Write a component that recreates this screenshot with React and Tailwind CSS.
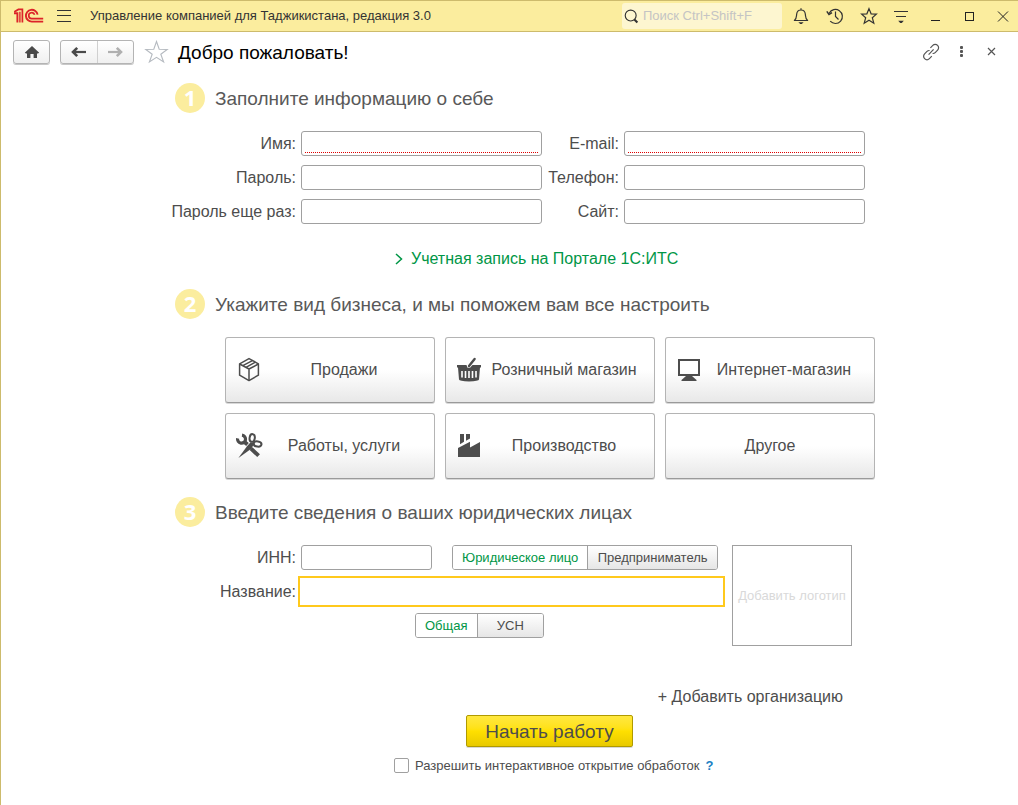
import React, { useState } from 'react';

const inputClass =
  'h-[25px] w-full min-w-0 rounded-[3px] border border-[#a0a0a0] bg-white px-1 text-base text-[#333] outline-none';

const Logo = () => (
  <svg width="30" height="16" viewBox="0 0 30 16" fill="none" stroke="#dc2329" strokeWidth="1.9">
    <path d="M0 5.2H3.4V14.4" />
    <path d="M0.2 3.9L4.4 1.4H8.4V14.4" strokeWidth="1.7" />
    <path d="M5.9 3.8V14.4" strokeWidth="1.4" />
    <path d="M23.6 6.6A5.9 5.9 0 1 0 17.9 13.6H29.2" />
    <path d="M20.6 6.8A3 3 0 1 0 18 10.7H29.2" strokeWidth="1.7" />
  </svg>
);

const MenuIcon = () => (
  <svg width="16" height="16" viewBox="0 0 16 16" stroke="#333" strokeWidth="1">
    <path d="M1 2.5H15M1 7.5H15M1 13.5H15" />
  </svg>
);

const SearchIcon = () => (
  <svg width="17" height="17" viewBox="0 0 17 17" fill="none" stroke="#333">
    <circle cx="7.6" cy="7.4" r="6.2" strokeWidth="1.3" />
    <path d="M11.8 11.8L15.2 15.2" strokeWidth="2.4" />
  </svg>
);

const BellIcon = () => (
  <svg width="20" height="20" viewBox="0 0 20 20" fill="none" stroke="#333" strokeWidth="1.2">
    <path d="M10 2.2V4M3.4 14.5C5.6 12.6 5.4 11 5.6 8.6C5.8 5.8 7.4 4 10 4S14.2 5.8 14.4 8.6C14.6 11 14.4 12.6 16.6 14.5Z" strokeLinejoin="round" />
    <path d="M7.4 16.2H12.6L10.8 18H9.2Z" fill="#333" stroke="none" />
  </svg>
);

const HistoryIcon = () => (
  <svg width="20" height="20" viewBox="0 0 20 20" fill="none" stroke="#333" strokeWidth="1.2">
    <path d="M4.2 7.2A7 7 0 1 1 5.2 15.2" />
    <path d="M10.5 5.5V10.5L13.5 13.5" />
    <path d="M1.8 5.4L4 8.4L7 6.6" strokeWidth="1.5" />
  </svg>
);

const StarIcon = () => (
  <svg width="20" height="20" viewBox="0 0 20 20" fill="none" stroke="#333" strokeWidth="1.2">
    <path d="M10 2.6L12.1 7.8L17.4 8.1L13.3 11.7L14.8 17.2L10 14.2L5.2 17.2L6.7 11.7L2.6 8.1L7.9 7.8Z" />
  </svg>
);

const FilterIcon = () => (
  <svg width="20" height="20" viewBox="0 0 20 20" stroke="#333" strokeWidth="1.2">
    <path d="M3 5.5H17M5 10.5H15" />
    <path d="M7.2 14.8H12.8L10.8 17H9.2Z" fill="#333" stroke="none" />
  </svg>
);

const MinimizeIcon = () => (
  <svg width="20" height="20" viewBox="0 0 20 20" stroke="#222">
    <path d="M6 14.5H15" />
  </svg>
);

const MaximizeIcon = () => (
  <svg width="20" height="20" viewBox="0 0 20 20" fill="none" stroke="#222">
    <rect x="6.5" y="6.5" width="8" height="8" />
  </svg>
);

const CloseIcon = () => (
  <svg width="20" height="20" viewBox="0 0 20 20" stroke="#222" strokeWidth="1">
    <path d="M5 5.5L15 15.5M15 5.5L5 15.5" />
  </svg>
);

const HomeIcon = () => (
  <svg width="16" height="14" viewBox="0 0 16 14" fill="#4a4a4a">
    <path d="M8 1L15.2 7.8L14 8.6H13V13H9.6V9H6.4V13H3V8.6H2L0.8 7.8Z" />
  </svg>
);

const ArrowIcon = ({ flip, color }) => (
  <svg width="16" height="12" viewBox="0 0 16 12" fill="none" stroke={color} strokeWidth="2.2" className={flip ? 'rotate-180' : ''}>
    <path d="M15 6H2.5" />
    <path d="M6.2 1.8L2 6L6.2 10.2" strokeWidth="2.6" />
  </svg>
);

const FavoriteIcon = () => (
  <svg width="25" height="24" viewBox="0 0 25 24" fill="none" stroke="#b5bac0" strokeWidth="1.1">
    <path d="M12.5 1.5L15.2 9.2L23.2 9.4L16.8 14.2L19.6 22L12.5 17.3L5.4 22L8.2 14.2L1.8 9.4L9.8 9.2Z" />
  </svg>
);

const LinkIcon = () => (
  <svg width="20" height="20" viewBox="0 0 20 20" fill="none" stroke="#555" strokeWidth="1.2">
    <path d="M9.4 5.8L11.8 3.4A3.2 3.2 0 0 1 16.6 8.2L14.2 10.6A3.2 3.2 0 0 1 11.6 11.5" />
    <path d="M10.8 14.2L8.4 16.6A3.2 3.2 0 0 1 3.6 11.8L6 9.4A3.2 3.2 0 0 1 8.6 8.5" />
    <path d="M7.6 12.6L12.6 7.4" />
  </svg>
);

const DotsIcon = () => (
  <svg width="20" height="20" viewBox="0 0 20 20" fill="#555">
    <rect x="9" y="4" width="3" height="3" rx="1" />
    <rect x="9" y="8" width="3" height="3" rx="1" />
    <rect x="9" y="12" width="3" height="3" rx="1" />
  </svg>
);

const SmallCloseIcon = () => (
  <svg width="20" height="20" viewBox="0 0 20 20" stroke="#555" strokeWidth="1.2">
    <path d="M7 6L14 13M14 6L7 13" />
  </svg>
);

const BoxIcon = () => (
  <svg width="26" height="26" viewBox="0 0 26 26" fill="none" stroke="#4d4d4d" strokeWidth="1.5" strokeLinejoin="round">
    <path d="M13 1.6L22.4 6.8V18.2L13 23.6L3.6 18.2V6.8Z" />
    <path d="M3.6 7L13 12L22.4 7M13 12V23.4M6.8 8.6L16.4 3.6M10 10.4L19.4 5.2" />
  </svg>
);

const BasketIcon = () => (
  <svg width="26" height="26" viewBox="0 0 26 26" fill="#4d4d4d">
    <path d="M1 8H10.5L11.5 10.8H14L16.5 8H25V10.5H24L23 22.5Q22.8 24 13 24.4Q3.2 24 3 22.5L2 10.5H1Z" />
    <path d="M18.6 2L13 9" stroke="#4d4d4d" strokeWidth="2.4" strokeLinecap="round" />
    <path d="M6 14V20.5M9.5 14V21M13 14V21M16.5 14V21M20 14V20.5" stroke="#fff" strokeWidth="1.6" />
  </svg>
);

const MonitorIcon = () => (
  <svg width="26" height="26" viewBox="0 0 26 26" fill="#4d4d4d">
    <path d="M2 2H24V19H2ZM4 4V17H22V4Z" fillRule="evenodd" />
    <path d="M10 19H16L20.5 23V24H5.5V23Z" />
  </svg>
);

const ToolsIcon = () => (
  <svg width="28" height="26" viewBox="0 0 28 26" fill="none" stroke="#4d4d4d">
    <path d="M2.6 5.4A4 4 0 1 0 7 2.2" strokeWidth="3.2" />
    <path d="M9.5 9L12.5 11.6M16 15.6L23.6 22.6" strokeWidth="4" />
    <path d="M3.4 25L16.6 15.4L19 10.4L15.6 9.2L12 13.2Z" fill="#4d4d4d" stroke="none" />
    <ellipse cx="17.2" cy="5" rx="2.6" ry="3.9" transform="rotate(8 17.2 5)" strokeWidth="2" />
    <ellipse cx="22.6" cy="11" rx="3.9" ry="2.6" transform="rotate(6 22.6 11)" strokeWidth="2" />
  </svg>
);

const FactoryIcon = () => (
  <svg width="26" height="26" viewBox="0 0 26 26" fill="#4d4d4d">
    <path d="M4 1H8V8.8L4 11.2ZM10 1H14V5.6L10 7.8Z" />
    <path d="M2 15L14 8.8V14.4L24 9V24H2Z" />
  </svg>
);

const businessTypes = [
  { label: 'Продажи', icon: BoxIcon },
  { label: 'Розничный магазин', icon: BasketIcon },
  { label: 'Интернет-магазин', icon: MonitorIcon },
  { label: 'Работы, услуги', icon: ToolsIcon },
  { label: 'Производство', icon: FactoryIcon },
  { label: 'Другое' },
];

const serviceButtons = [
  { label: 'Уведомления', icon: BellIcon },
  { label: 'История', icon: HistoryIcon },
  { label: 'Избранное', icon: StarIcon },
];

const windowButtons = [
  { label: 'Настройки', icon: FilterIcon },
  { label: 'Свернуть', icon: MinimizeIcon },
  { label: 'Развернуть', icon: MaximizeIcon },
  { label: 'Закрыть', icon: CloseIcon },
];

const IconButtons = ({ items }) => (
  <div className="flex gap-[14px]">
    {items.map(({ label, icon: Icon }) => (
      <button key={label} type="button" aria-label={label}>
        <Icon />
      </button>
    ))}
  </div>
);

const StepHeading = ({ number, children }) => (
  <div className="flex items-center gap-[10px]">
    <span className="flex size-[30px] shrink-0 items-center justify-center rounded-full bg-[#fbed9e] pb-[3px] font-['Open_Sans',sans-serif] text-[22px] font-bold leading-none text-white">
      {number}
    </span>
    <h2 className="pt-0.5 text-[19px] leading-6 text-[#595959]">{children}</h2>
  </div>
);

const Field = ({ id, label, type = 'text', required }) => (
  <>
    <label htmlFor={id} className="flex justify-end whitespace-nowrap">{label}</label>
    <div className="relative flex">
      <input id={id} type={type} className={inputClass} />
      {required && (
        <span className="pointer-events-none absolute inset-x-[4px] bottom-[3px] border-b border-dotted border-[#e00000]" />
      )}
    </div>
  </>
);

const Segmented = ({ options, value, onChange, className }) => (
  <div className={`flex h-[25px] overflow-hidden rounded-[3px] border border-[#a0a0a0] text-[13px] ${className}`}>
    {options.map((option) => (
      <button
        key={option}
        type="button"
        aria-pressed={option === value}
        onClick={() => onChange(option)}
        className={`whitespace-nowrap border-l border-[#a0a0a0] px-[9px] first:border-l-0 ${
          option === value ? 'bg-white text-[#009646]' : 'flex-1 bg-gradient-to-b from-white to-[#e6e6e6] text-[#4d4d4d]'
        }`}
      >
        {option}
      </button>
    ))}
  </div>
);

const App = () => {
  const [entity, setEntity] = useState('Юридическое лицо');
  const [tax, setTax] = useState('Общая');

  return (
    <div className="min-h-screen border-l border-t border-[#cdbb6c] bg-white font-['Liberation_Sans',Arial,sans-serif] text-base leading-5 text-[#4d4d4d]">
      {/* Title bar */}
      <header className="flex h-[31px] items-center border-b border-[#cdbb6c] bg-[#fbed9e] pl-[13px] pr-[5px] text-[13px] text-[#333]">
        <Logo />
        <button type="button" aria-label="Меню" className="ml-3">
          <MenuIcon />
        </button>
        <span className="ml-[18px] truncate">Управление компанией для Таджикистана, редакция 3.0</span>
        <label className="ml-auto flex h-[26px] w-40 shrink-0 items-center gap-1 rounded-[3px] bg-[#fdf6d0] pl-[2px]">
          <SearchIcon />
          <input
            type="text"
            aria-label="Поиск"
            placeholder="Поиск Ctrl+Shift+F"
            className="w-full min-w-0 bg-transparent outline-none placeholder:text-[#c4c4c4]"
          />
        </label>
        <div className="ml-[9px] flex gap-3">
          <IconButtons items={serviceButtons} />
          <IconButtons items={windowButtons} />
        </div>
      </header>

      {/* Page toolbar */}
      <div className="flex items-center pl-3 pr-[17px] pt-2">
        <button type="button" aria-label="Домой" className="flex h-6 w-[37px] items-center justify-center rounded-[3px] border border-[#b4b4b4] bg-gradient-to-b from-white to-[#f0f0f0] shadow-[0_1px_0_#c8c8c8]">
          <HomeIcon />
        </button>
        <div className="ml-[10px] flex h-6 w-[74px] rounded-[3px] border border-[#b4b4b4] bg-gradient-to-b from-white to-[#f0f0f0] shadow-[0_1px_0_#c8c8c8]">
          <button type="button" aria-label="Назад" className="flex flex-1 items-center justify-center">
            <ArrowIcon color="#4a4a4a" />
          </button>
          <button type="button" aria-label="Вперед" className="flex flex-1 items-center justify-center border-l border-[#d0d0d0]">
            <ArrowIcon color="#b0b0b0" flip />
          </button>
        </div>
        <button type="button" aria-label="Добавить в избранное" className="ml-[10px]">
          <FavoriteIcon />
        </button>
        <h1 className="ml-[9px] pt-0.5 text-[19px] text-black">Добро пожаловать!</h1>
        <div className="ml-auto flex gap-[10px]">
          <button type="button" aria-label="Ссылка"><LinkIcon /></button>
          <button type="button" aria-label="Еще"><DotsIcon /></button>
          <button type="button" aria-label="Закрыть страницу"><SmallCloseIcon /></button>
        </div>
      </div>

      <main className="mx-auto mt-[19px] w-full max-w-[731px] pl-[31px]">
        <StepHeading number="1">Заполните информацию о себе</StepHeading>
        <div className="mr-[10px] mt-[18px] grid grid-cols-[121px_1fr_72px_1fr] items-center gap-x-[5px] gap-y-[9px]">
          <Field id="name" label="Имя:" required />
          <Field id="email" label="E-mail:" type="email" required />
          <Field id="password" label="Пароль:" type="password" />
          <Field id="phone" label="Телефон:" type="tel" />
          <Field id="password2" label="Пароль еще раз:" type="password" />
          <Field id="site" label="Сайт:" type="url" />
        </div>
        <a href="#portal" className="ml-[220px] mt-[25px] flex w-fit items-center gap-2 text-[#009646]">
          <svg width="8" height="12" viewBox="0 0 8 12" fill="none" stroke="#009646" strokeWidth="1.5">
            <path d="M1 1L6.5 6L1 11" />
          </svg>
          Учетная запись на Портале 1С:ИТС
        </a>

        <div className="mt-5">
          <StepHeading number="2">Укажите вид бизнеса, и мы поможем вам все настроить</StepHeading>
        </div>
        <div className="ml-[50px] mt-[18px] grid grid-cols-3 gap-[10px]">
          {businessTypes.map(({ label, icon: Icon }) => (
            <button
              key={label}
              type="button"
              className="flex h-[66px] items-center rounded-[3px] border border-[#b4b4b4] border-b-[#9a9a9a] bg-gradient-to-b from-white from-50% to-[#e8e8e8] px-[9px] shadow-[0_1px_0_#d8d8d8]"
            >
              {Icon && <span className="flex w-7 shrink-0 justify-center"><Icon /></span>}
              <span className="flex-1 whitespace-nowrap text-center">{label}</span>
            </button>
          ))}
        </div>

        <div className="mt-[18px]">
          <StepHeading number="3">Введите сведения о ваших юридических лицах</StepHeading>
        </div>
        <div className="mt-[18px] flex gap-[7px]">
          <div className="flex w-[550px] flex-col gap-[6px]">
            <div className="flex items-center">
              <label htmlFor="inn" className="w-[121px] text-right">ИНН:</label>
              <div className="ml-[5px] flex w-[131px]">
                <input id="inn" type="text" className={inputClass} />
              </div>
              <Segmented
                options={['Юридическое лицо', 'Предприниматель']}
                value={entity}
                onChange={setEntity}
                className="ml-5 w-[266px]"
              />
            </div>
            <div className="flex items-center">
              <label htmlFor="company" className="w-[121px] text-right">Название:</label>
              <input id="company" type="text" className="ml-[2px] h-[31px] min-w-0 flex-1 border-2 border-[#ffc91c] bg-white px-1 outline-none" />
            </div>
            <Segmented options={['Общая', 'УСН']} value={tax} onChange={setTax} className="ml-60 w-[129px]" />
          </div>
          <button type="button" className="h-[101px] w-[120px] whitespace-nowrap border border-[#a0a0a0] text-[13px] text-[#d9d9d9]">
            Добавить логотип
          </button>
        </div>

        <div className="mr-8 mt-[41px] flex justify-end">
          <button type="button">+ Добавить организацию</button>
        </div>
        <button
          type="button"
          className="ml-[291px] mt-2 flex h-8 w-[167px] items-center justify-center rounded-[2px] border border-[#b09a00] bg-gradient-to-b from-[#ffe83e] via-[#ffe000] to-[#e8c900] pt-0.5 text-[19px] text-[#4d4d4d] shadow-[0_1px_0_#d8d8d8]"
        >
          Начать работу
        </button>
        <div className="ml-[219px] mt-[11px] flex h-[15px] items-center text-[13px]">
          <input id="interactive" type="checkbox" className="size-[15px] appearance-none rounded-[2px] border border-[#a0a0a0] bg-white checked:bg-[#009646]" />
          <label htmlFor="interactive" className="ml-[6px]">Разрешить интерактивное открытие обработок</label>
          <a href="#help" className="ml-[6px] font-bold text-[#1a7fc4]">?</a>
        </div>
      </main>
    </div>
  );
};

export default App;
